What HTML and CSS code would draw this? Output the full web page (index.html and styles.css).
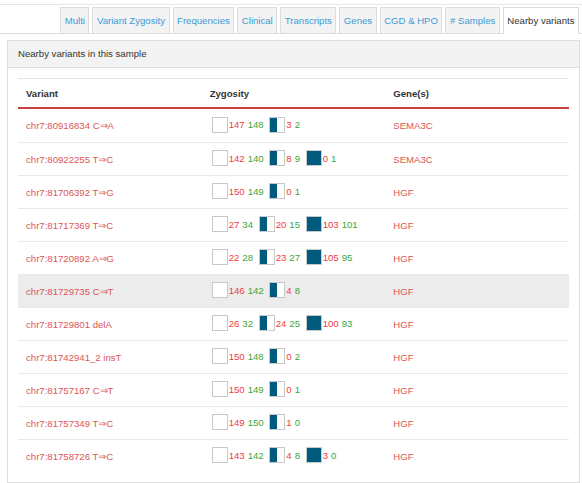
FILE: index.html
```html
<!DOCTYPE html>
<html lang="en">
<head>
  <meta charset="UTF-8">
  <title>Nearby variants</title>
  <link rel="stylesheet" href="styles.css">
</head>
<body>
  <div class="ust-cizgi"></div>

  <ul class="sekmeler">
    <li><a href="#">Multi</a></li>
    <li><a href="#">Variant Zygosity</a></li>
    <li><a href="#">Frequencies</a></li>
    <li><a href="#">Clinical</a></li>
    <li><a href="#">Transcripts</a></li>
    <li><a href="#">Genes</a></li>
    <li><a href="#">CGD &amp; HPO</a></li>
    <li><a href="#"># Samples</a></li>
    <li class="aktif"><a href="#">Nearby variants</a></li>
  </ul>

  <div class="panel">
    <div class="panel-baslik">Nearby variants in this sample</div>
    <div class="panel-govde">
      <table class="varyantlar">
        <thead>
          <tr><th>Variant</th><th>Zygosity</th><th>Gene(s)</th></tr>
        </thead>
        <tbody id="satirlar"></tbody>
      </table>
    </div>
  </div>

  <script>
    // [variant, [[ref, alt, fill], ...], gene]
    const satirlar = [
      ["chr7:80916834 C⇒A", [[147,148,0],[3,2,1]], "SEMA3C"],
      ["chr7:80922255 T⇒C", [[142,140,0],[8,9,1],[0,1,2]], "SEMA3C"],
      ["chr7:81706392 T⇒G", [[150,149,0],[0,1,1]], "HGF"],
      ["chr7:81717369 T⇒C", [[27,34,0],[20,15,1],[103,101,2]], "HGF"],
      ["chr7:81720892 A⇒G", [[22,28,0],[23,27,1],[105,95,2]], "HGF"],
      ["chr7:81729735 C⇒T", [[146,142,0],[4,8,1]], "HGF", true],
      ["chr7:81729801 delA", [[26,32,0],[24,25,1],[100,93,2]], "HGF"],
      ["chr7:81742941_2 insT", [[150,148,0],[0,2,1]], "HGF"],
      ["chr7:81757167 C⇒T", [[150,149,0],[0,1,1]], "HGF"],
      ["chr7:81757349 T⇒C", [[149,150,0],[1,0,1]], "HGF"],
      ["chr7:81758726 T⇒C", [[143,142,0],[4,8,1],[3,0,2]], "HGF"]
    ];

    const kutuSinif = ["bos", "yarim", "dolu"];
    const tbody = document.getElementById("satirlar");

    satirlar.forEach(s => {
      const tr = document.createElement("tr");
      if (s[3]) tr.className = "secili";
      const gruplar = s[1].map(g => `
        <span class="grup">
          <span class="kutu ${kutuSinif[g[2]]}"></span><span class="ref">${g[0]}</span> <span class="alt">${g[1]}</span>
        </span>`).join("");
      tr.innerHTML = `
        <td><a href="#" class="varyant">${s[0]}</a></td>
        <td class="zigot">${gruplar}</td>
        <td class="gen">${s[2]}</td>
      `;
      tbody.appendChild(tr);
    });
  </script>
</body>
</html>
```

FILE: styles.css
```css
body {
  margin: 0;
  font-family: "Liberation Sans", Arial, sans-serif;
  font-size: 9.6px;
  color: #333;
  background: #fff;
}

.ust-cizgi {
  margin-top: 4px;
  border-top: 1px solid #e6e6e6;
}

.sekmeler {
  list-style: none;
  margin: 2px 0 0 0;
  padding: 0 3px 0 0;
  display: flex;
  justify-content: flex-end;
  border-bottom: 1px solid #dcdcdc;
}

.sekmeler li {
  margin-left: 3px;
  margin-bottom: -1px;
}

.sekmeler a {
  display: block;
  height: 25px;
  line-height: 25px;
  padding: 0 3.5px;
  background-color: #f3f3f3;
  border: 1px solid #dcdcdc;
  border-bottom: none;
  color: #3b9ad6;
  text-decoration: none;
}

.sekmeler li.aktif a {
  background-color: #fff;
  color: #333;
  height: 26px;
}

.panel {
  margin: 6px 2px 0 7px;
  border: 1px solid #dedede;
}

.panel-baslik {
  height: 26px;
  line-height: 26px;
  padding: 0 10px;
  background-color: #f3f3f3;
  border-bottom: 1px solid #dedede;
}

.panel-govde {
  padding: 10px;
}

.varyantlar {
  width: 100%;
  border-collapse: collapse;
  table-layout: fixed;
}

.varyantlar th {
  text-align: left;
  font-weight: bold;
  height: 28px;
  padding: 0 8px;
  border-top: 1px solid #e6e6e6;
  border-bottom: 2px solid #c9423f;
}

.varyantlar td {
  height: 32px;
  padding: 0 8px;
  border-top: 1px solid #e8e8e8;
  vertical-align: middle;
}

.varyantlar tbody tr:first-child td {
  border-top: none;
  height: 33px;
}

.varyantlar tr.secili td {
  background-color: #ececec;
}

.varyant {
  color: #dd5555;
  text-decoration: none;
}

.gen {
  color: #dd5555;
}

.zigot {
  white-space: nowrap;
  padding-left: 10px !important;
}

.grup {
  display: inline-flex;
  align-items: center;
  margin-right: 3px;
}

.kutu {
  display: inline-block;
  width: 14px;
  height: 14px;
  border: 1px solid #c8c8c8;
  margin-right: 1px;
  background-color: #fff;
}

.kutu.yarim {
  background: linear-gradient(to right, #005b7f 50%, #fff 50%);
}

.kutu.dolu {
  background-color: #005b7f;
}

.ref {
  color: #f23b3b;
}

.alt {
  color: #3aa63a;
  margin-left: 3px;
}
```
